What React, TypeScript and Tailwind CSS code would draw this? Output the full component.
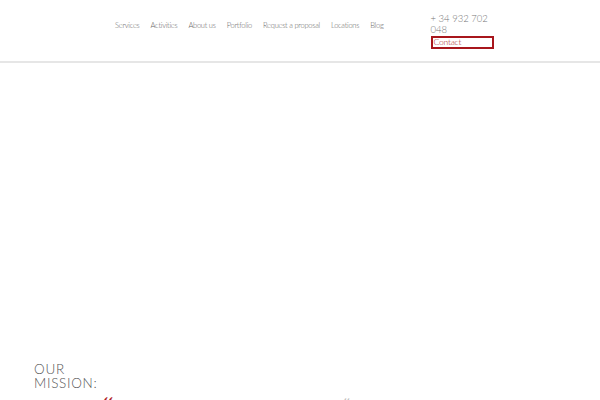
import React from 'react';

const links = ['Services', 'Activities', 'About us', 'Portfolio', 'Request a proposal', 'Locations', 'Blog'];

export default function App() {
  return (
    <div className="w-[600px] h-[400px] overflow-hidden bg-white" style={{ fontFamily: 'Lato, "Liberation Sans", sans-serif' }}>
      <header className="h-[63px] border-b-2 border-[#e6e6e6] flex items-start pl-[115px]">
        <nav className="flex gap-[11px] mt-[21px] text-[7.5px] font-light text-[#666] tracking-[-0.25px]">
          {links.map(l => (
            <a key={l} href="#" className="leading-[10px]">{l}</a>
          ))}
        </nav>
        <div className="ml-[47px] mt-[13px] w-[63px] text-[9.5px] font-light text-[#777] leading-[11px]">
          <div>+ 34 932 702 048</div>
          <a href="#" className="block mt-[1px] border-2 border-[#a8161c] text-[#a8161c] text-[8.5px] h-[13px] leading-[9px] px-[1px] tracking-[-0.2px]">Contact</a>
        </div>
      </header>
      <main className="h-[300px]" />
      <section className="pl-[34px] relative">
        <h2 className="text-[13.5px] font-light text-[#555] leading-[13.5px] uppercase tracking-[0.7px]">Our<br />Mission:</h2>
        <span className="absolute left-[101px] top-[30px] text-[30px] leading-[30px] text-[#b01c2a] font-serif italic">“</span>
        <span className="absolute left-[343px] top-[32px] text-[20px] leading-[20px] text-[#bbb]">“</span>
      </section>
    </div>
  );
}
